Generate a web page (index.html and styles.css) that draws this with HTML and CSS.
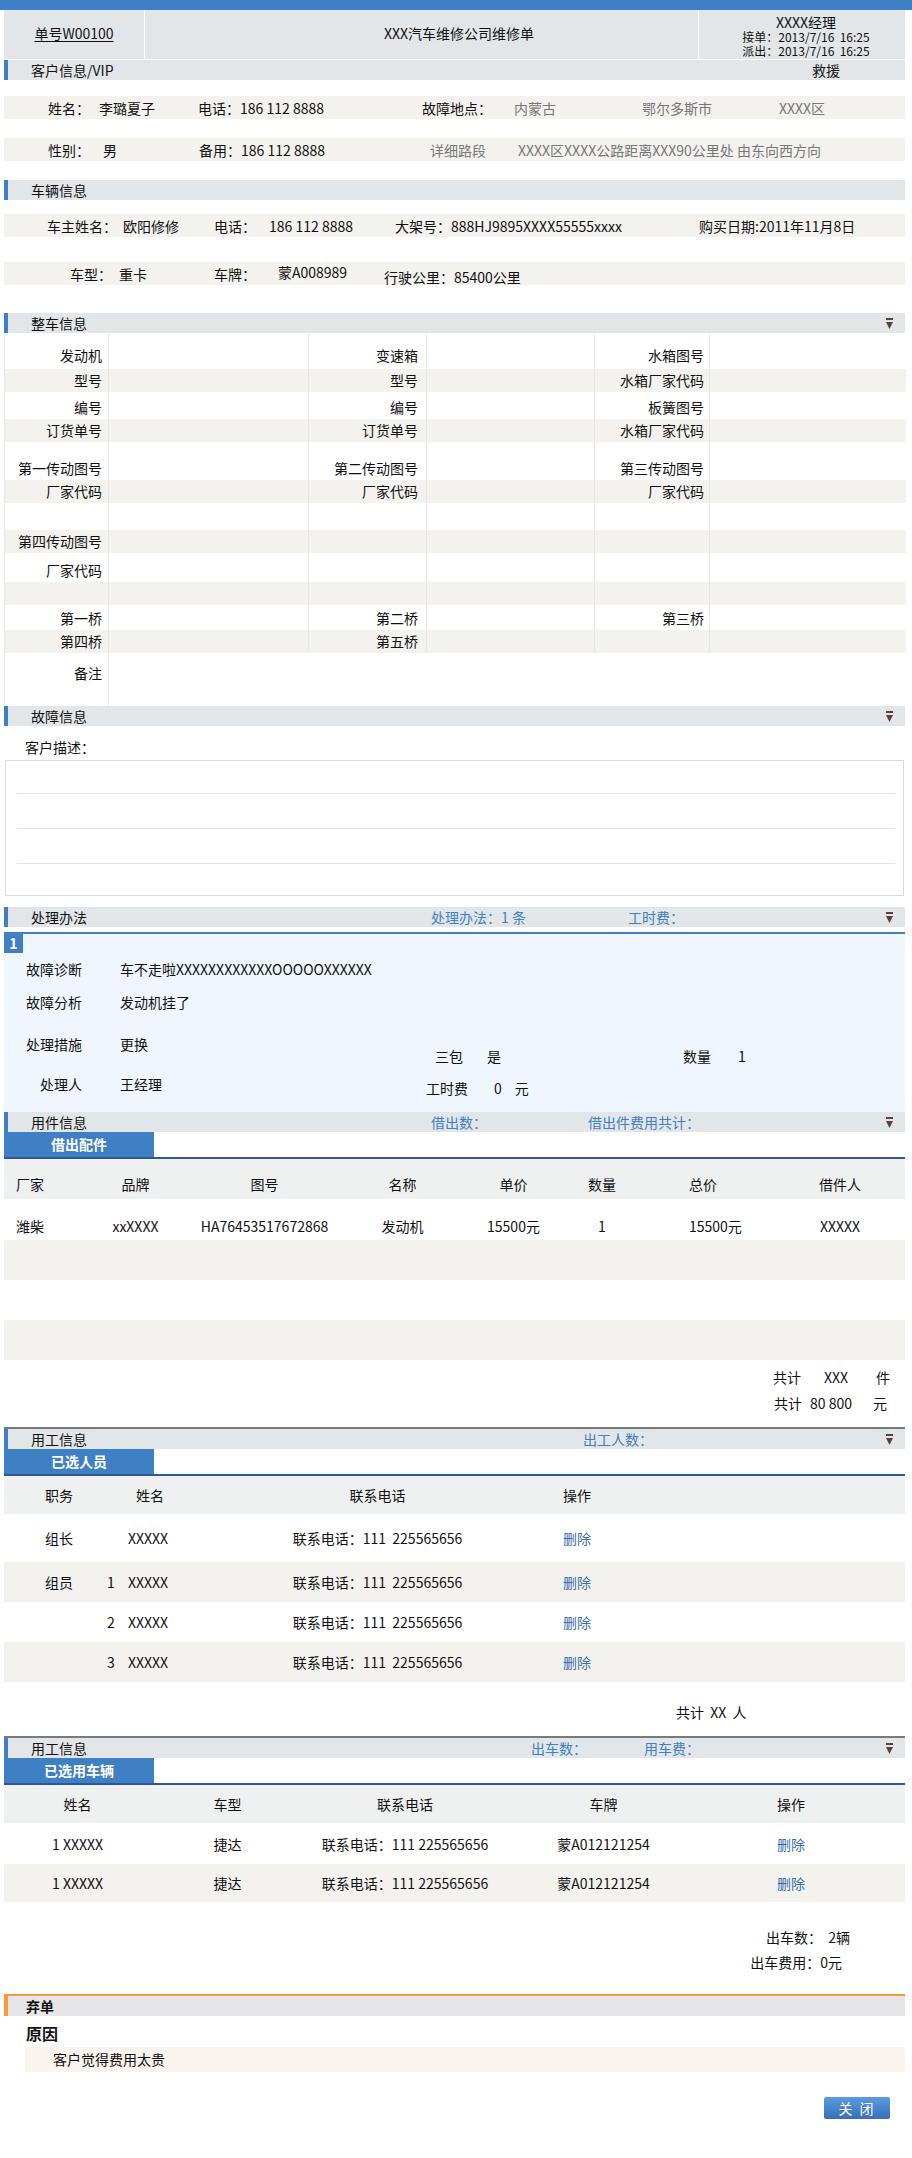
FILE: index.html
```html
<!DOCTYPE html>
<html lang="zh-CN">
<head>
<meta charset="utf-8">
<title>XXX汽车维修公司维修单</title>
<link rel="stylesheet" href="styles.css">
</head>
<body>
<div class="topbar"></div>
<div class="page">

  <header class="doc-head">
    <div class="head-no"><span class="order-no">单号W00100</span></div>
    <div class="head-title">XXX汽车维修公司维修单</div>
    <div class="head-right">
      <div class="mgr">XXXX经理</div>
      <div class="ts">接单：2013/7/16&nbsp;&nbsp;16:25</div>
      <div class="ts">派出：2013/7/16&nbsp;&nbsp;16:25</div>
    </div>
  </header>

  <div class="bar bar-first">
    <span class="bar-title grow">客户信息/VIP</span>
    <span class="bar-rescue">救援</span>
  </div>
  <div class="info-row cust-1">
    <span>姓名：</span><span>李璐夏子</span><span>电话：186 112 8888</span><span>故障地点：</span><span class="muted">内蒙古</span><span class="muted">鄂尔多斯市</span><span class="muted">XXXX区</span>
  </div>
  <div class="info-row cust-2">
    <span>性别：</span><span>男</span><span>备用：186 112 8888</span><span class="muted">详细路段</span><span class="muted">XXXX区XXXX公路距离XXX90公里处 由东向西方向</span>
  </div>

  <div class="bar bar-car">
    <span class="bar-title grow">车辆信息</span>
  </div>
  <div class="info-row car-1">
    <span>车主姓名：</span><span>欧阳修修</span><span>电话：</span><span>186 112 8888</span><span>大架号：888HJ9895XXXX55555xxxx</span><span>购买日期:2011年11月8日</span>
  </div>
  <div class="info-row car-2">
    <span>车型：</span><span>重卡</span><span>车牌：</span><span class="plate">蒙A008989</span><span class="mileage">行驶公里：85400公里</span>
  </div>

  <div class="bar bar-whole">
    <span class="bar-title grow">整车信息</span>
    <svg class="fold" width="7" height="11" viewBox="0 0 7 11"><rect x="0" y="0" width="7" height="2" fill="#5e3f36"/><path d="M0 4H7L3.5 11Z" fill="#5e3f36"/></svg>
  </div>
  <table class="spec">
    <colgroup><col><col><col><col><col><col></colgroup>
    <tr class="h36"><td class="lbl">发动机</td><td></td><td class="lbl">变速箱</td><td></td><td class="lbl">水箱图号</td><td></td></tr>
    <tr class="h23 alt"><td class="lbl">型号</td><td></td><td class="lbl">型号</td><td></td><td class="lbl">水箱厂家代码</td><td></td></tr>
    <tr class="h27"><td class="lbl">编号</td><td></td><td class="lbl">编号</td><td></td><td class="lbl">板簧图号</td><td></td></tr>
    <tr class="h23 alt"><td class="lbl">订货单号</td><td></td><td class="lbl">订货单号</td><td></td><td class="lbl">水箱厂家代码</td><td></td></tr>
    <tr class="h38"><td class="lbl">第一传动图号</td><td></td><td class="lbl">第二传动图号</td><td></td><td class="lbl">第三传动图号</td><td></td></tr>
    <tr class="h23 alt"><td class="lbl">厂家代码</td><td></td><td class="lbl">厂家代码</td><td></td><td class="lbl">厂家代码</td><td></td></tr>
    <tr class="h27"><td></td><td></td><td></td><td></td><td></td><td></td></tr>
    <tr class="h23 alt"><td class="lbl">第四传动图号</td><td></td><td></td><td></td><td></td><td></td></tr>
    <tr class="h29"><td class="lbl">厂家代码</td><td></td><td></td><td></td><td></td><td></td></tr>
    <tr class="h23 alt"><td></td><td></td><td></td><td></td><td></td><td></td></tr>
    <tr class="h25"><td class="lbl">第一桥</td><td></td><td class="lbl">第二桥</td><td></td><td class="lbl">第三桥</td><td></td></tr>
    <tr class="h23 alt"><td class="lbl">第四桥</td><td></td><td class="lbl">第五桥</td><td></td><td></td><td></td></tr>
    <tr class="h53 note"><td class="lbl">备注</td><td colspan="5"></td></tr>
  </table>

  <div class="bar">
    <span class="bar-title grow">故障信息</span>
    <svg class="fold" width="7" height="11" viewBox="0 0 7 11"><rect x="0" y="0" width="7" height="2" fill="#5e3f36"/><path d="M0 4H7L3.5 11Z" fill="#5e3f36"/></svg>
  </div>
  <div class="desc-label">客户描述：</div>
  <div class="desc-box">
    <div class="desc-line l1"></div>
    <div class="desc-line l2"></div>
    <div class="desc-line l3"></div>
    <div class="desc-line l4"></div>
  </div>

  <div class="bar bar-proc">
    <span class="bar-title t-proc">处理办法</span>
    <span class="bar-link l-proc">处理办法：1 条</span>
    <span class="bar-link grow">工时费：</span>
    <svg class="fold" width="7" height="11" viewBox="0 0 7 11"><rect x="0" y="0" width="7" height="2" fill="#5e3f36"/><path d="M0 4H7L3.5 11Z" fill="#5e3f36"/></svg>
  </div>
  <div class="proc-panel">
    <div class="proc-no">1</div>
    <div class="proc-row pr-1"><span class="p-lbl">故障诊断</span><span class="p-val">车不走啦XXXXXXXXXXXXOOOOOXXXXXX</span></div>
    <div class="proc-row pr-2"><span class="p-lbl">故障分析</span><span class="p-val">发动机挂了</span></div>
    <div class="proc-row pr-3"><span class="p-lbl">处理措施</span><span class="p-val">更换</span><span class="p-lbl2">三包</span><span class="p-val2">是</span><span class="p-qty"><span>数量</span><span class="qty-num">1</span></span></div>
    <div class="proc-row pr-4"><span class="p-lbl">处理人</span><span class="p-val">王经理</span><span class="p-lbl2">工时费</span><span class="p-val2 fee"><span class="fee-num">0</span><span>元</span></span></div>
  </div>

  <div class="bar">
    <span class="bar-title t-proc">用件信息</span>
    <span class="bar-link l-lend">借出数：</span>
    <span class="bar-link grow">借出件费用共计：</span>
    <svg class="fold" width="7" height="11" viewBox="0 0 7 11"><rect x="0" y="0" width="7" height="2" fill="#5e3f36"/><path d="M0 4H7L3.5 11Z" fill="#5e3f36"/></svg>
  </div>
  <div class="tabs"><span class="tab">借出配件</span></div>
  <table class="list parts">
    <colgroup><col><col><col><col><col><col><col><col></colgroup>
    <tr class="head"><th class="left">厂家</th><th>品牌</th><th>图号</th><th>名称</th><th>单价</th><th>数量</th><th class="total">总价</th><th>借件人</th></tr>
    <tr class="first"><td class="left">潍柴</td><td>xxXXXX</td><td>HA76453517672868</td><td>发动机</td><td>15500元</td><td>1</td><td class="total">15500元</td><td>XXXXX</td></tr>
    <tr class="alt"><td></td><td></td><td></td><td></td><td></td><td></td><td></td><td></td></tr>
    <tr><td></td><td></td><td></td><td></td><td></td><td></td><td></td><td></td></tr>
    <tr class="alt"><td></td><td></td><td></td><td></td><td></td><td></td><td></td><td></td></tr>
  </table>
  <div class="sum parts-sum">
    <div class="sum-line s1"><span class="s-a">共计</span><span class="s-b">XXX</span><span>件</span></div>
    <div class="sum-line s2"><span class="s-c">共计</span><span class="s-d">80 800</span><span>元</span></div>
  </div>

  <div class="bar bar-grey">
    <span class="bar-title t-work">用工信息</span>
    <span class="bar-link grow">出工人数：</span>
    <svg class="fold" width="7" height="11" viewBox="0 0 7 11"><rect x="0" y="0" width="7" height="2" fill="#5e3f36"/><path d="M0 4H7L3.5 11Z" fill="#5e3f36"/></svg>
  </div>
  <div class="tabs"><span class="tab">已选人员</span></div>
  <table class="list staff">
    <colgroup><col><col><col><col></colgroup>
    <tr class="head"><th class="c-role">职务</th><th class="c-name-h">姓名</th><th>联系电话</th><th class="c-op">操作</th></tr>
    <tr class="tall"><td class="c-role">组长</td><td class="c-name"><span class="idx"></span>XXXXX</td><td>联系电话：111&nbsp;&nbsp;225565656</td><td class="c-op"><a class="del">删除</a></td></tr>
    <tr class="alt"><td class="c-role">组员</td><td class="c-name"><span class="idx">1</span>XXXXX</td><td>联系电话：111&nbsp;&nbsp;225565656</td><td class="c-op"><a class="del">删除</a></td></tr>
    <tr><td class="c-role"></td><td class="c-name"><span class="idx">2</span>XXXXX</td><td>联系电话：111&nbsp;&nbsp;225565656</td><td class="c-op"><a class="del">删除</a></td></tr>
    <tr class="alt"><td class="c-role"></td><td class="c-name"><span class="idx">3</span>XXXXX</td><td>联系电话：111&nbsp;&nbsp;225565656</td><td class="c-op"><a class="del">删除</a></td></tr>
  </table>
  <div class="staff-sum">共计&nbsp;&nbsp;XX&nbsp;&nbsp;人</div>

  <div class="bar bar-grey">
    <span class="bar-title t-car">用工信息</span>
    <span class="bar-link l-car">出车数：</span>
    <span class="bar-link grow">用车费：</span>
    <svg class="fold" width="7" height="11" viewBox="0 0 7 11"><rect x="0" y="0" width="7" height="2" fill="#5e3f36"/><path d="M0 4H7L3.5 11Z" fill="#5e3f36"/></svg>
  </div>
  <div class="tabs"><span class="tab">已选用车辆</span></div>
  <table class="list cars">
    <colgroup><col><col><col><col><col></colgroup>
    <tr class="head"><th>姓名</th><th>车型</th><th>联系电话</th><th>车牌</th><th class="c-last">操作</th></tr>
    <tr class="first"><td>1 XXXXX</td><td>捷达</td><td>联系电话：111 225565656</td><td>蒙A012121254</td><td class="c-last"><a class="del">删除</a></td></tr>
    <tr class="alt"><td>1 XXXXX</td><td>捷达</td><td>联系电话：111 225565656</td><td>蒙A012121254</td><td class="c-last"><a class="del">删除</a></td></tr>
  </table>
  <div class="car-sum">
    <div class="cs-1">出车数：&nbsp;&nbsp;2辆</div>
    <div class="cs-2">出车费用：0元</div>
  </div>

  <div class="bar bar-abandon">
    <span class="bar-title">弃单</span>
  </div>
  <div class="reason-title">原因</div>
  <div class="reason-box">客户觉得费用太贵</div>
  <div class="actions"><button class="btn-close">关 闭</button></div>
</div>
</body>
</html>
```

FILE: styles.css
```css
* { box-sizing: border-box; }

body {
  margin: 0;
  font-family: "Noto Sans CJK SC", "Noto Sans", sans-serif;
  font-size: 14px;
  color: #111;
  background: #fff;
}

.topbar {
  height: 10px;
  background: #3f7fc4;
}

.page {
  width: 905px;
  padding-left: 4px;
  padding-bottom: 39px;
}

/* ---------- document header ---------- */
.doc-head {
  display: grid;
  grid-template-columns: 140px 553px 1fr;
  column-gap: 1px;
  height: 49px;
  background: #fff;
}
.doc-head > div { background: #e3e6e8; }

.head-no {
  display: flex;
  align-items: center;
  justify-content: center;
  padding-bottom: 3px;
}
.order-no {
  line-height: 16px;
  text-decoration: underline;
  text-underline-offset: 2px;
}
.head-title {
  display: flex;
  align-items: center;
  padding-left: 239px;
  padding-bottom: 4px;
}
.head-right {
  text-align: center;
  padding-top: 4px;
  padding-left: 8px;
}
.mgr { line-height: 16px; }
.ts { font-size: 12px; line-height: 14px; }

/* ---------- section bars ---------- */
.bar {
  display: flex;
  align-items: center;
  height: 20px;
  line-height: 20px;
  background: #e3e6e8;
  border-left: 4px solid #3f7fc4;
  padding-left: 23px;
  padding-right: 12px;
}
.bar .grow { flex: 1; }
.bar-first { margin-top: 1px; }
.bar-rescue { margin-right: 53px; }
.bar-link { color: #3f7fc4; }
.fold { display: block; }

.t-proc { width: 400px; }
.l-proc { width: 197px; }
.l-lend { width: 157px; }
.t-work { width: 552px; }
.t-car { width: 500px; }
.l-car { width: 113px; }

.bar-car { margin-top: 19px; }
.bar-whole { margin-top: 28px; }
.bar-proc { margin-top: 11px; }

.bar-grey {
  height: 22px;
  border-top: 2px solid #7a7a7a;
  margin-top: 16px;
}

.bar-abandon {
  height: 22px;
  margin-top: 24px;
  border-top: 2px solid #f7993b;
  border-left-color: #f7993b;
  background: #e6e6e8;
  padding-left: 18px;
  font-weight: bold;
}

/* ---------- info rows ---------- */
.info-row {
  display: grid;
  align-items: center;
  height: 23px;
  line-height: 16px;
  background: #f3f2ef;
  white-space: nowrap;
}
.muted { color: #777; }

.cust-1 {
  margin-top: 16px;
  padding-left: 44px;
  grid-template-columns: 51px 99px 224px 92px 128px 137px auto;
}
.cust-2 {
  margin-top: 19px;
  padding-left: 44px;
  grid-template-columns: 55px 96px 231px 88px auto;
}
.car-1 {
  margin-top: 14px;
  padding-left: 43px;
  grid-template-columns: 76px 91px 55px 126px 304px auto;
}
.car-2 {
  margin-top: 25px;
  padding-left: 66px;
  grid-template-columns: 49px 95px 64px 106px auto;
}
.car-2 .plate { padding-bottom: 4px; }
.car-2 .mileage { padding-top: 6px; }

/* ---------- whole vehicle spec table ---------- */
.spec {
  width: 901px;
  border-collapse: collapse;
  table-layout: fixed;
}
.spec col:nth-child(1) { width: 104px; }
.spec col:nth-child(2) { width: 200px; }
.spec col:nth-child(3) { width: 118px; }
.spec col:nth-child(4) { width: 168px; }
.spec col:nth-child(5) { width: 115px; }
.spec col:nth-child(6) { width: 196px; }
.spec td {
  border-left: 1px solid #e8e8e8;
  padding: 0 0 4px 0;
  vertical-align: bottom;
  line-height: 16px;
  text-align: right;
  white-space: nowrap;
}
.spec td:nth-child(1).lbl { padding-right: 6px; }
.spec td:nth-child(3).lbl { padding-right: 8px; }
.spec td:nth-child(5).lbl { padding-right: 5px; }
.spec tr.alt td { background: #f3f2ef; }
.spec .h23 { height: 23px; }
.spec .h25 { height: 25px; }
.spec .h27 { height: 27px; }
.spec .h29 { height: 29px; }
.spec .h36 { height: 36px; }
.spec .h36 td { padding-bottom: 6px; }
.spec .h38 { height: 38px; }
.spec .h53 { height: 53px; }
.spec .note td { vertical-align: top; padding-top: 12px; }

/* ---------- fault description ---------- */
.desc-label {
  margin-top: 13px;
  padding-left: 21px;
  line-height: 16px;
}
.desc-box {
  margin: 5px 1px 0 1px;
  height: 136px;
  border: 1px solid #dcdcdc;
  padding: 0 8px 0 11px;
}
.desc-line { border-bottom: 1px solid #e4e4e4; }
.desc-line.l1 { height: 33px; }
.desc-line.l2 { height: 35px; }
.desc-line.l3 { height: 35px; }
.desc-line.l4 { height: 31px; border-bottom: 0; }

/* ---------- processing panel ---------- */
.proc-panel {
  margin-top: 5px;
  border-top: 2px solid #3f7fc4;
  background: #eff6fe;
  padding-bottom: 16px;
}
.proc-no {
  width: 19px;
  height: 19px;
  background: #3f7fc4;
  color: #fff;
  font-weight: bold;
  text-align: center;
  line-height: 19px;
}
.proc-row {
  display: grid;
  grid-template-columns: 78px 344px 37px 220px auto;
  line-height: 16px;
  white-space: nowrap;
}
.p-lbl { text-align: right; }
.p-val { padding-left: 38px; }
.p-lbl2 { text-align: right; }
.p-val2 { padding-left: 24px; }
.qty-num { margin-left: 27px; }
.fee { padding-left: 31px; }
.fee-num { margin-right: 13px; }

.pr-1 { margin-top: 8px; }
.pr-2 { margin-top: 17px; }
.pr-3 { margin-top: 26px; height: 28px; }
.pr-4 { margin-top: 12px; height: 20px; }
.pr-3 .p-lbl2, .pr-3 .p-val2, .pr-3 .p-qty,
.pr-4 .p-lbl2, .pr-4 .p-val2 { align-self: end; }

/* ---------- tabs ---------- */
.tabs {
  height: 27px;
  border-bottom: 2px solid #2f569a;
}
.tab {
  display: block;
  width: 150px;
  height: 25px;
  line-height: 25px;
  background: #3f7fc4;
  color: #fff;
  font-weight: bold;
  text-align: center;
}

/* ---------- list tables ---------- */
.list {
  width: 901px;
  border-collapse: collapse;
  table-layout: fixed;
}
.list th, .list td {
  font-weight: normal;
  text-align: center;
  padding: 0;
  line-height: 16px;
  white-space: nowrap;
}
.list .head th { background: #eff0f0; }
.list tr.alt td { background: #f3f2ef; }
.list .left { text-align: left; padding-left: 12px; }
.del { color: #3a6ea8; text-decoration: none; }

.parts col:nth-child(1) { width: 76px; }
.parts col:nth-child(2) { width: 111px; }
.parts col:nth-child(3) { width: 147px; }
.parts col:nth-child(4) { width: 129px; }
.parts col:nth-child(5) { width: 93px; }
.parts col:nth-child(6) { width: 84px; }
.parts col:nth-child(7) { width: 131px; }
.parts col:nth-child(8) { width: 130px; }
.parts tr { height: 40px; }
.parts tr.first { height: 41px; }
.parts th { vertical-align: bottom; padding-bottom: 7px; }
.parts tr.first td { vertical-align: bottom; padding-bottom: 6px; }
.parts .total { text-align: left; padding-left: 45px; }

.sum-line {
  text-align: right;
  line-height: 16px;
}
.s1 { margin-top: 9px; padding-right: 15px; }
.s2 { margin-top: 10px; padding-right: 18px; }
.s-a { margin-right: 23px; }
.s-b { margin-right: 28px; }
.s-c { margin-right: 8px; }
.s-d { margin-right: 21px; }

.staff col:nth-child(1) { width: 91px; }
.staff col:nth-child(2) { width: 104px; }
.staff col:nth-child(3) { width: 357px; }
.staff col:nth-child(4) { width: 349px; }
.staff tr { height: 40px; }
.staff tr.head { height: 38px; }
.staff tr.tall { height: 48px; }
.staff .c-role { text-align: left; padding-left: 41px; }
.staff .c-name-h { text-align: left; padding-left: 41px; }
.staff .c-name { text-align: left; padding-left: 12px; }
.staff .idx { display: inline-block; width: 21px; }
.staff .c-op { text-align: left; padding-left: 7px; }

.staff-sum {
  margin-top: 22px;
  padding-left: 672px;
  line-height: 16px;
}

.cars col:nth-child(1) { width: 147px; }
.cars col:nth-child(2) { width: 153px; }
.cars col:nth-child(3) { width: 202px; }
.cars col:nth-child(4) { width: 195px; }
.cars col:nth-child(5) { width: 204px; }
.cars tr { height: 38px; }
.cars tr.first { height: 41px; }
.cars .c-last { padding-right: 24px; }

.car-sum { text-align: right; line-height: 16px; }
.cs-1 { margin-top: 27px; padding-right: 55px; }
.cs-2 { margin-top: 9px; padding-right: 63px; }

/* ---------- abandon ---------- */
.reason-title {
  margin-top: 7px;
  padding-left: 22px;
  font-size: 16px;
  font-weight: bold;
  line-height: 20px;
}
.reason-box {
  margin-top: 4px;
  margin-left: 21px;
  height: 25px;
  line-height: 25px;
  padding-left: 28px;
  background: #faf4ee;
}
.actions {
  display: flex;
  justify-content: flex-end;
  margin-top: 25px;
  padding-right: 15px;
}
.btn-close {
  width: 66px;
  height: 22px;
  border: 0;
  border-radius: 2px;
  background: linear-gradient(#5b9be0, #3a6fb7);
  color: #fff;
  font-family: inherit;
  font-size: 14px;
  line-height: 22px;
  padding: 0;
  letter-spacing: 2px;
}
```
